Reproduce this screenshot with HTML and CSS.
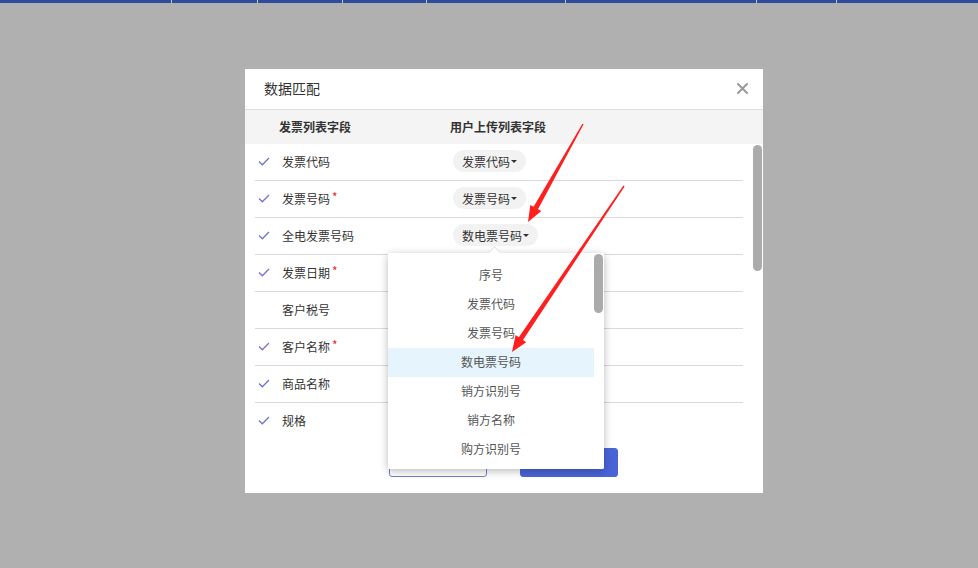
FILE: index.html
```html
<!DOCTYPE html>
<html lang="zh-CN">
<head>
<meta charset="utf-8">
<title>数据匹配</title>
<link rel="stylesheet" href="styles.css">
</head>
<body>
<div class="topbar">
  <span class="seg s1"></span><span class="seg s2"></span><span class="seg s3"></span><span class="seg s4"></span><span class="seg s5"></span><span class="seg s6"></span><span class="seg s7"></span><span class="seg s8"></span>
</div>

<div class="modal">
  <div class="modal-head">
    <span class="title">数据匹配</span>
    <svg class="close" width="11" height="11" viewBox="0 0 11 11"><path d="M1 1L10 10M10 1L1 10" stroke="#9a9a9a" stroke-width="2" stroke-linecap="round"/></svg>
  </div>
  <div class="thead">
    <span class="th th1">发票列表字段</span>
    <span class="th th2">用户上传列表字段</span>
  </div>
  <div class="tbody">
    <div class="rows">
      <div class="row">
        <svg class="chk" width="12" height="9" viewBox="0 0 12 9"><polyline points="1,4.5 4.3,7.8 11,1" fill="none" stroke="#6c72d4" stroke-width="1.3"/></svg>
        <span class="name">发票代码</span>
        <span class="pill">发票代码<i class="caret"></i></span>
      </div>
      <div class="row">
        <svg class="chk" width="12" height="9" viewBox="0 0 12 9"><polyline points="1,4.5 4.3,7.8 11,1" fill="none" stroke="#7a6fd2" stroke-width="1.3"/></svg>
        <span class="name">发票号码<em class="req">*</em></span>
        <span class="pill">发票号码<i class="caret"></i></span>
      </div>
      <div class="row">
        <svg class="chk" width="12" height="9" viewBox="0 0 12 9"><polyline points="1,4.5 4.3,7.8 11,1" fill="none" stroke="#6c72d4" stroke-width="1.3"/></svg>
        <span class="name">全电发票号码</span>
        <span class="pill">数电票号码<i class="caret"></i></span>
      </div>
      <div class="row">
        <svg class="chk" width="12" height="9" viewBox="0 0 12 9"><polyline points="1,4.5 4.3,7.8 11,1" fill="none" stroke="#7a6fd2" stroke-width="1.3"/></svg>
        <span class="name">发票日期<em class="req">*</em></span>
      </div>
      <div class="row">
        <span class="chk-empty"></span>
        <span class="name">客户税号</span>
      </div>
      <div class="row">
        <svg class="chk" width="12" height="9" viewBox="0 0 12 9"><polyline points="1,4.5 4.3,7.8 11,1" fill="none" stroke="#7a6fd2" stroke-width="1.3"/></svg>
        <span class="name">客户名称<em class="req">*</em></span>
      </div>
      <div class="row">
        <svg class="chk" width="12" height="9" viewBox="0 0 12 9"><polyline points="1,4.5 4.3,7.8 11,1" fill="none" stroke="#6c72d4" stroke-width="1.3"/></svg>
        <span class="name">商品名称</span>
      </div>
      <div class="row">
        <svg class="chk" width="12" height="9" viewBox="0 0 12 9"><polyline points="1,4.5 4.3,7.8 11,1" fill="none" stroke="#6c72d4" stroke-width="1.3"/></svg>
        <span class="name">规格</span>
      </div>
    </div>
    <div class="vscroll"><div class="thumb"></div></div>
  </div>
  <div class="foot">
    <button class="btn ghost">取消</button>
    <button class="btn primary">确定</button>
  </div>

  <div class="dropdown">
    <i class="pointer"></i>
    <div class="dd-inner">
      <ul class="dd-list">
        <li class="dd-item">序号</li>
        <li class="dd-item">发票代码</li>
        <li class="dd-item">发票号码</li>
        <li class="dd-item active">数电票号码</li>
        <li class="dd-item">销方识别号</li>
        <li class="dd-item">销方名称</li>
        <li class="dd-item">购方识别号</li>
      </ul>
      <div class="dd-scroll"><div class="dd-thumb"></div></div>
    </div>
  </div>
</div>

<svg class="arrows" width="978" height="568" viewBox="0 0 978 568">
  <polygon fill="#ff1f1f" points="583.6,124.3 538,209.2 541.3,211 528,222 530.3,204.9 533.6,206.7 582.4,123.7"/>
  <polygon fill="#ff1f1f" points="624.6,186.4 523,340.1 526.2,342.3 512,352 515.6,335.1 518.8,337.3 623.4,185.6"/>
</svg>
</body>
</html>
```

FILE: styles.css
```css
* { box-sizing: border-box; }
html, body { margin: 0; padding: 0; }
body {
  width: 978px;
  height: 568px;
  overflow: hidden;
  background: #b0b0b0;
  font-family: "Noto Sans CJK SC", "Noto Sans", sans-serif;
  font-size: 12px;
  color: #333;
  position: relative;
}

.topbar { display: flex; height: 3px; background: #2f4b9b; }
.seg { height: 3px; border-right: 1px solid #c9c9c9; flex: none; }
.s1 { width: 172px; }
.s2 { width: 86px; }
.s3 { width: 85px; }
.s4 { width: 84px; }
.s5 { width: 139px; }
.s6 { width: 191px; }
.s7 { width: 80px; }
.s8 { flex: 1; border-right: none; }

.modal {
  position: relative;
  margin: 66px 0 0 245px;
  width: 518px;
  height: 424px;
  background: #fff;
  display: flex;
  flex-direction: column;
}

.modal-head {
  height: 41px;
  border-bottom: 1px solid #dedede;
  display: flex;
  align-items: center;
  justify-content: space-between;
  padding: 0 15px 2px 19px;
}
.title { font-size: 14px; color: #333; }
.close { display: block; }

.thead {
  height: 34px;
  background: #f4f4f4;
  display: flex;
  align-items: center;
  padding: 0 0 2px 34px;
  font-weight: bold;
  color: #333;
}
.th1 { width: 171px; }

.tbody { height: 296px; display: flex; overflow: hidden; }
.rows { margin-left: 10px; width: 488px; }
.row {
  height: 37px;
  border-bottom: 1px solid #d9d9d9;
  display: flex;
  align-items: center;
  padding-bottom: 2px;
}
.row:last-child { border-bottom: none; }
.chk { margin-left: 3px; flex: none; display: block; }
.chk-empty { width: 12px; margin-left: 3px; flex: none; }
.name { margin-left: 12px; width: 171px; flex: none; }
.req { font-style: normal; color: #f5222d; font-size: 12px; position: relative; top: -2px; margin-left: 2px; }

.pill {
  display: inline-flex;
  align-items: center;
  height: 22px;
  padding: 0 9px 0 9px;
  border-radius: 11px;
  background: #f2f2f2;
  color: #333;
}
.caret {
  width: 0; height: 0;
  border-left: 3px solid transparent;
  border-right: 3px solid transparent;
  border-top: 3px solid #333;
  margin-left: 1px;
  margin-top: 1px;
}

.vscroll { margin-left: 10px; width: 9px; padding-top: 1px; }
.thumb { width: 9px; height: 126px; border-radius: 5px; background: #ababab; }

.foot {
  display: flex;
  justify-content: center;
  gap: 33px;
  padding: 8px 2px 16px 0;
}
.btn {
  width: 98px;
  height: 29px;
  border-radius: 3px;
  font-family: inherit;
  font-size: 12px;
}
.ghost { background: #fff; border: 1px solid #7280c6; color: #4a63d6; }
.primary { background: #4a64d8; border: 1px solid #4a64d8; color: #fff; }

.dropdown {
  position: absolute;
  left: 143px;
  top: 184px;
  width: 216px;
  height: 216px;
  background: #fff;
  border-radius: 2px;
  box-shadow: 0 2px 9px rgba(0, 0, 0, 0.28);
}
.pointer {
  position: absolute;
  left: 102px;
  top: -5px;
  width: 9px;
  height: 9px;
  background: #fff;
  border-top: 1px solid #e2e2e2;
  border-left: 1px solid #e2e2e2;
  transform: rotate(45deg);
}
.dd-inner { position: relative; display: flex; height: 100%; background: #fff; border-radius: 2px; overflow: hidden; }
.dd-list { list-style: none; margin: 0; padding: 8px 0 0 0; width: 206px; }
.dd-item { height: 29px; line-height: 27px; text-align: center; color: #555; font-size: 12px; }
.dd-item.active { background: #e6f4fd; }
.dd-scroll { width: 9px; padding-top: 1px; }
.dd-thumb { width: 9px; height: 59px; border-radius: 5px; background: #ababab; }

.arrows { position: absolute; left: 0; top: 0; pointer-events: none; }
```
